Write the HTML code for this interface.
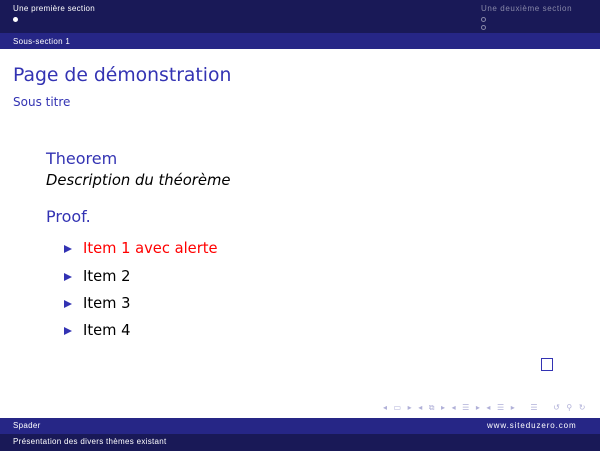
<html><head><style>
body{margin:0;width:600px;height:451px;position:relative;background:#fff;font-family:"DejaVu Sans","Liberation Sans",sans-serif;overflow:hidden}
div{position:absolute}
.s{font-size:8px;white-space:nowrap;font-family:"Liberation Sans",sans-serif;letter-spacing:0.3px}
.it{font-size:14.7px;left:83px;color:#000}
.tri{left:64px;width:0;height:0;border-left:8px solid #3333b3;border-top:4.5px solid transparent;border-bottom:4.5px solid transparent}
</style></head><body>
<div style="left:0;top:0;width:600px;height:33px;background:#191957"></div>
<div style="left:0;top:33px;width:600px;height:16px;background:#262686"></div>
<div class="s" style="left:13px;top:4px;color:#fff">Une première section</div>
<div style="left:13px;top:17px;width:5px;height:5px;border-radius:50%;background:#fff"></div>
<div class="s" style="left:481px;top:4px;color:#8888a8;letter-spacing:0.6px">Une deuxième section</div>
<div style="left:481px;top:17px;width:3px;height:3px;border-radius:50%;border:1px solid #8888a8"></div>
<div style="left:481px;top:25px;width:3px;height:3px;border-radius:50%;border:1px solid #8888a8"></div>
<div class="s" style="left:13px;top:37px;color:#fff">Sous-section 1</div>
<div style="left:13px;top:65px;font-size:18.8px;color:#3333b3">Page de démonstration</div>
<div style="left:13px;top:95px;font-size:12px;color:#3333b3">Sous titre</div>
<div style="left:46px;top:149px;font-size:16px;color:#3333b3">Theorem</div>
<div style="left:46px;top:172px;font-size:14.8px;font-style:italic">Description du théorème</div>
<div style="left:46px;top:207px;font-size:16px;color:#3333b3">Proof.</div>
<div class="tri" style="top:245px"></div><div class="it" style="top:240px;color:#f00">Item 1 avec alerte</div>
<div class="tri" style="top:273px"></div><div class="it" style="top:268px">Item 2</div>
<div class="tri" style="top:300px"></div><div class="it" style="top:295px">Item 3</div>
<div class="tri" style="top:327px"></div><div class="it" style="top:322px">Item 4</div>
<div style="left:541px;top:358px;width:10px;height:11px;border:1px solid #3333b3"></div>
<div style="left:383px;top:403px;font-size:8px;color:#b0b0d8;letter-spacing:2px;white-space:nowrap">◂ ▭ ▸ ◂ ⧉ ▸ ◂ ☰ ▸ ◂ ☰ ▸ &nbsp; ☰ &nbsp; ↺ ⚲ ↻</div>
<div style="left:0;top:418px;width:600px;height:16px;background:#262686"></div>
<div style="left:0;top:434px;width:600px;height:17px;background:#191957"></div>
<div class="s" style="left:13px;top:421px;color:#fff">Spader</div>
<div class="s" style="left:487px;top:421px;color:#fff;letter-spacing:0.9px">www.siteduzero.com</div>
<div class="s" style="left:13px;top:437px;color:#fff">Présentation des divers thèmes existant</div>
</body></html>
